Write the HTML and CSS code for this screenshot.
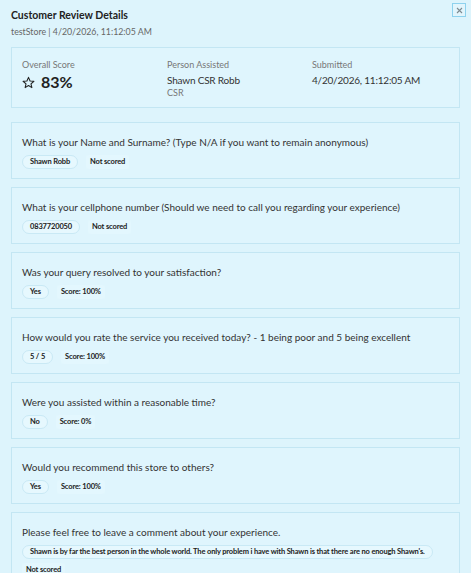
FILE: index.html
```html
<!DOCTYPE html>
<html>
<head>
<meta charset="utf-8">
<link rel="stylesheet" href="styles.css">
</head>
<body>
<div class="modal">
  <div class="header">
    <div>
      <div class="title">Customer Review Details</div>
      <div class="subtitle">testStore | 4/20/2026, 11:12:05 AM</div>
    </div>
    <button class="close" aria-label="Close">
      <svg width="7" height="7" viewBox="0 0 7 7"><path d="M1 1L6 6M6 1L1 6" stroke="#7d8a90" stroke-width="1.1"/></svg>
    </button>
  </div>

  <div class="summary card">
    <div class="col">
      <div class="label">Overall Score</div>
      <div class="score">
        <svg width="13" height="13" viewBox="0 0 24 24"><path d="M12 2.5l2.9 6.6 7.1.6-5.4 4.7 1.6 7-6.2-3.7-6.2 3.7 1.6-7L2 9.7l7.1-.6z" fill="none" stroke="#222" stroke-width="2" stroke-linejoin="round"/></svg>
        <span>83%</span>
      </div>
    </div>
    <div class="col">
      <div class="label">Person Assisted</div>
      <div class="value">Shawn CSR Robb</div>
      <div class="sub">CSR</div>
    </div>
    <div class="col">
      <div class="label">Submitted</div>
      <div class="value">4/20/2026, 11:12:05 AM</div>
    </div>
  </div>

  <div class="card q">
    <div class="question">What is your Name and Surname? (Type N/A if you want to remain anonymous)</div>
    <div class="answers"><span class="pill">Shawn Robb</span><span class="tag">Not scored</span></div>
  </div>
  <div class="card q">
    <div class="question">What is your cellphone number (Should we need to call you regarding your experience)</div>
    <div class="answers"><span class="pill">0837720050</span><span class="tag">Not scored</span></div>
  </div>
  <div class="card q">
    <div class="question">Was your query resolved to your satisfaction?</div>
    <div class="answers"><span class="pill">Yes</span><span class="tag">Score: 100%</span></div>
  </div>
  <div class="card q">
    <div class="question">How would you rate the service you received today? - 1 being poor and 5 being excellent</div>
    <div class="answers"><span class="pill">5 / 5</span><span class="tag">Score: 100%</span></div>
  </div>
  <div class="card q">
    <div class="question">Were you assisted within a reasonable time?</div>
    <div class="answers"><span class="pill">No</span><span class="tag">Score: 0%</span></div>
  </div>
  <div class="card q">
    <div class="question">Would you recommend this store to others?</div>
    <div class="answers"><span class="pill">Yes</span><span class="tag">Score: 100%</span></div>
  </div>
  <div class="card q">
    <div class="question">Please feel free to leave a comment about your experience.</div>
    <div class="answers"><span class="pill">Shawn is by far the best person in the whole world. The only problem i have with Shawn is that there are no enough Shawn's.</span><span class="tag">Not scored</span></div>
  </div>
</div>
</body>
</html>
```
FILE: styles.css
```css
html, body {
  margin: 0;
  padding: 0;
  background: #ddf4fc;
}
body {
  font-family: Lato, "Noto Sans", sans-serif;
  color: #333;
  overflow: hidden;
}
.modal {
  padding: 8px 11px 0 11px;
  display: flex;
  flex-direction: column;
  gap: 8px;
}
.header {
  display: flex;
  justify-content: space-between;
  align-items: flex-start;
  margin-right: -6px;
  margin-bottom: 1px;
}
.title {
  font-size: 10.5px;
  font-weight: 700;
  color: #222;
  line-height: 14px;
}
.subtitle {
  font-size: 8.8px;
  color: #666;
  line-height: 13px;
  margin-top: 3px;
}
.close {
  margin-top: -5px;
  width: 14px;
  height: 14px;
  padding: 0;
  border: 1.5px solid #8ed2ee;
  background: #e2f5fc;
  display: flex;
  align-items: center;
  justify-content: center;
}
.card {
  background: #dff5fd;
  border: 1px solid #c3e6f3;
  box-sizing: border-box;
}
.summary {
  display: grid;
  grid-template-columns: 1fr 1fr 1fr;
  gap: 8px;
  padding: 11px 10px 8px 10px;
  height: 61px;
  margin-bottom: 6px;
}
.label {
  font-size: 9px;
  color: #777;
  line-height: 12px;
}
.score {
  display: flex;
  align-items: center;
  gap: 6px;
  margin-top: 1px;
}
.score span {
  font-size: 16px;
  font-weight: 700;
  color: #222;
  line-height: 20px;
}
.value {
  font-size: 10px;
  letter-spacing: -0.2px;
  color: #333;
  line-height: 14px;
  margin-top: 2px;
}
.sub {
  font-size: 9px;
  color: #777;
  line-height: 12px;
}
.q {
  padding: 12px 10px 9px 10px;
  min-height: 56px;
}
.question {
  font-size: 10px;
  color: #333;
  line-height: 14px;
}
.answers {
  display: flex;
  flex-wrap: wrap;
  align-items: center;
  gap: 4px 8px;
  margin-top: 6px;
}
.pill {
  font-size: 7.5px;
  font-weight: 700;
  color: #222;
  line-height: 12px;
  padding: 0 7px;
  border: 1px solid #c9e9f5;
  border-radius: 8px;
  background: #e6f8fe;
  letter-spacing: -0.15px;
}
.tag {
  font-size: 7.5px;
  font-weight: 700;
  color: #222;
  line-height: 14px;
  padding: 0 4px;
  border-radius: 3px;
  background: #e3f7fe;
  letter-spacing: -0.15px;
}
```
